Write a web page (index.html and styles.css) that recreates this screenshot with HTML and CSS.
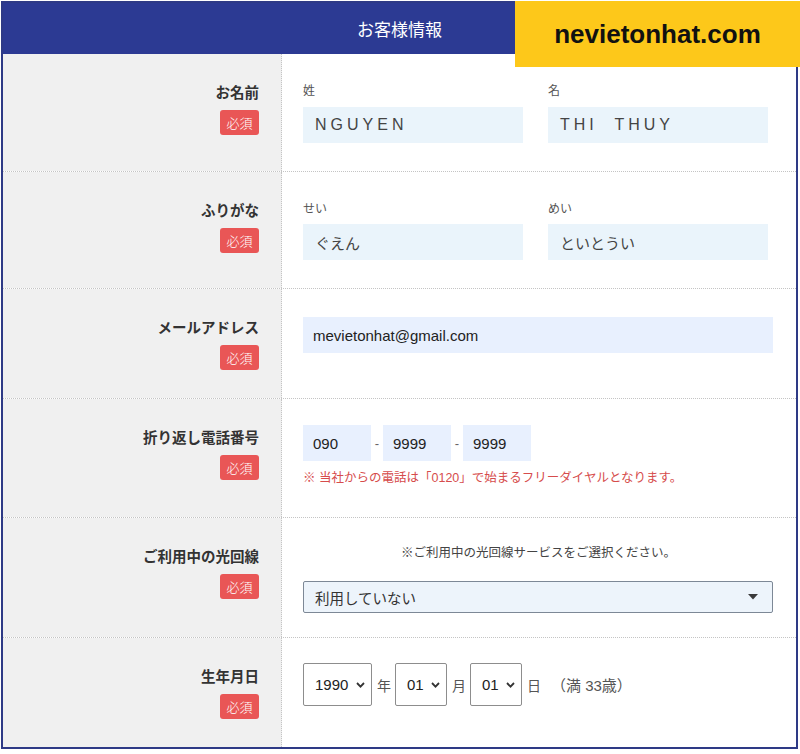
FILE: index.html
```html
<!DOCTYPE html>
<html lang="ja">
<head>
<meta charset="utf-8">
<title>お客様情報</title>
<link rel="stylesheet" href="styles.css">
</head>
<body>
<div class="page">
  <div class="frame">
    <div class="head">お客様情報</div>

    <div class="row">
      <div class="lab"><div class="lt">お名前</div><span class="req">必須</span></div>
      <div class="fld">
        <div class="pair">
          <div class="col"><div class="sub">姓</div><div class="box spaced">NGUYEN</div></div>
          <div class="col"><div class="sub">名</div><div class="box spaced">THI  THUY</div></div>
        </div>
      </div>
    </div>

    <div class="row">
      <div class="lab"><div class="lt">ふりがな</div><span class="req">必須</span></div>
      <div class="fld">
        <div class="pair">
          <div class="col"><div class="sub sub-kana">せい</div><div class="box">ぐえん</div></div>
          <div class="col"><div class="sub sub-kana">めい</div><div class="box">といとうい</div></div>
        </div>
      </div>
    </div>

    <div class="row">
      <div class="lab"><div class="lt">メールアドレス</div><span class="req">必須</span></div>
      <div class="fld">
        <div class="box auto email">mevietonhat@gmail.com</div>
      </div>
    </div>

    <div class="row">
      <div class="lab"><div class="lt">折り返し電話番号</div><span class="req">必須</span></div>
      <div class="fld fld-tel">
        <div class="tel">
          <div class="box auto tbox">090</div><span class="dash">-</span>
          <div class="box auto tbox">9999</div><span class="dash">-</span>
          <div class="box auto tbox">9999</div>
        </div>
        <div class="note-red">※ 当社からの電話は「0120」で始まるフリーダイヤルとなります。</div>
      </div>
    </div>

    <div class="row">
      <div class="lab"><div class="lt">ご利用中の光回線</div><span class="req">必須</span></div>
      <div class="fld fld-line">
        <div class="center-note">※ご利用中の光回線サービスをご選択ください。</div>
        <div class="select"><span>利用していない</span>
          <svg class="caret" width="10" height="6" viewBox="0 0 10 6"><polygon points="0,0 10,0 5,5.5" fill="#3a3a3a"/></svg>
        </div>
      </div>
    </div>

    <div class="row">
      <div class="lab"><div class="lt">生年月日</div><span class="req">必須</span></div>
      <div class="fld fld-date">
        <div class="date">
          <div class="dsel dy"><span>1990</span><svg width="9" height="6" viewBox="0 0 9 6"><path d="M1 1 L4.5 4.6 L8 1" fill="none" stroke="#333" stroke-width="1.8"/></svg></div>
          <span class="unit">年</span>
          <div class="dsel dm"><span>01</span><svg width="9" height="6" viewBox="0 0 9 6"><path d="M1 1 L4.5 4.6 L8 1" fill="none" stroke="#333" stroke-width="1.8"/></svg></div>
          <span class="unit">月</span>
          <div class="dsel dm"><span>01</span><svg width="9" height="6" viewBox="0 0 9 6"><path d="M1 1 L4.5 4.6 L8 1" fill="none" stroke="#333" stroke-width="1.8"/></svg></div>
          <span class="unit">日</span>
          <span class="age">（満 33歳）</span>
        </div>
      </div>
    </div>
  </div>
  <div class="brand">nevietonhat.com</div>
</div>
</body>
</html>
```

FILE: styles.css
```css
body {
  margin: 0;
  background: #ffffff;
  font-family: "Liberation Sans", "Noto Sans CJK JP", sans-serif;
  color: #333;
}

.page {
  position: relative;
  width: 800px;
  height: 754px;
}

.frame {
  margin: 1px 0 0 1px;
  width: 797px;
  box-sizing: border-box;
  border: 2px solid #2e3a86;
}

.head {
  height: 51px;
  background: #2c3a93;
  color: #ffffff;
  font-family: "Noto Sans CJK JP", sans-serif;
  font-size: 17px;
  display: flex;
  align-items: center;
  justify-content: center;
}

.row {
  display: grid;
  grid-template-columns: 279px 1fr;
  border-bottom: 1px dotted #c4c4c4;
}

.row:last-child {
  border-bottom: none;
}

.lab {
  background: #f0f0f0;
  border-right: 1px dotted #c4c4c4;
  padding: 28px 22px 28px 0;
  display: flex;
  flex-direction: column;
  align-items: flex-end;
}

.lt {
  font-family: "Noto Sans CJK JP", sans-serif;
  font-weight: 700;
  font-size: 14.5px;
  line-height: 20px;
  color: #333;
}

.req {
  margin-top: 8px;
  width: 39px;
  height: 25px;
  background: #e95656;
  color: #ffffff;
  border-radius: 3px;
  font-family: "Noto Sans CJK JP", sans-serif;
  font-size: 13px;
  font-weight: 300;
  display: flex;
  align-items: center;
  justify-content: center;
}

.fld {
  padding: 28px 22px 28px 21px;
}

.pair {
  display: flex;
  gap: 25px;
}

.col {
  width: 220px;
}

.sub {
  font-family: "Noto Sans CJK JP", sans-serif;
  font-size: 12px;
  line-height: 16px;
  color: #555;
  margin-bottom: 9px;
}

.sub-kana {
  margin-bottom: 8px;
}

.box {
  height: 36px;
  box-sizing: border-box;
  display: flex;
  align-items: center;
  padding-left: 12px;
  background: #eaf4fb;
  font-size: 15px;
  color: #444;
  white-space: pre;
}

.spaced {
  font-size: 16px;
  letter-spacing: 4px;
}

.auto {
  background: #e8f0fe;
  color: #222;
  padding-left: 10px;
}

.email {
  width: 470px;
}

.fld-tel {
  padding: 26px 22px 30px 21px;
}

.tel {
  display: flex;
  align-items: center;
}

.tbox {
  width: 68px;
}

.dash {
  width: 12px;
  text-align: center;
  font-size: 13px;
  color: #666;
}

.note-red {
  margin-top: 8px;
  line-height: 18px;
  font-size: 12.5px;
  color: #d64c4c;
}

.fld-line {
  padding: 27px 22px 24px 21px;
}

.center-note {
  text-align: center;
  font-size: 12.5px;
  line-height: 16px;
  color: #444;
  margin-bottom: 20px;
}

.select {
  width: 470px;
  height: 32px;
  box-sizing: border-box;
  border: 1px solid #7d8896;
  border-radius: 2px;
  background: #edf4fb;
  display: flex;
  align-items: center;
  justify-content: space-between;
  padding: 0 14px 0 11px;
  font-size: 14.5px;
  color: #333;
}

.fld-date {
  padding: 25px 22px 0 21px;
}

.date {
  display: flex;
  align-items: center;
}

.dsel {
  height: 43px;
  box-sizing: border-box;
  border: 1px solid #8d8d8d;
  border-radius: 2px;
  background: #ffffff;
  display: flex;
  align-items: center;
  justify-content: space-between;
  padding: 0 6px 0 11px;
  font-size: 15px;
  color: #222;
}

.dy {
  width: 69px;
}

.dm {
  width: 52px;
}

.unit {
  margin: 0 4px 0 5px;
  font-size: 14px;
  color: #555;
}

.age {
  margin-left: 6px;
  font-size: 15px;
  color: #555;
}

.brand {
  position: absolute;
  top: 0;
  left: 515px;
  width: 285px;
  height: 66px;
  background: #fdc81a;
  display: flex;
  align-items: center;
  justify-content: center;
  font-family: "Liberation Sans", sans-serif;
  font-weight: 700;
  font-size: 26px;
  color: #111;
}
```
